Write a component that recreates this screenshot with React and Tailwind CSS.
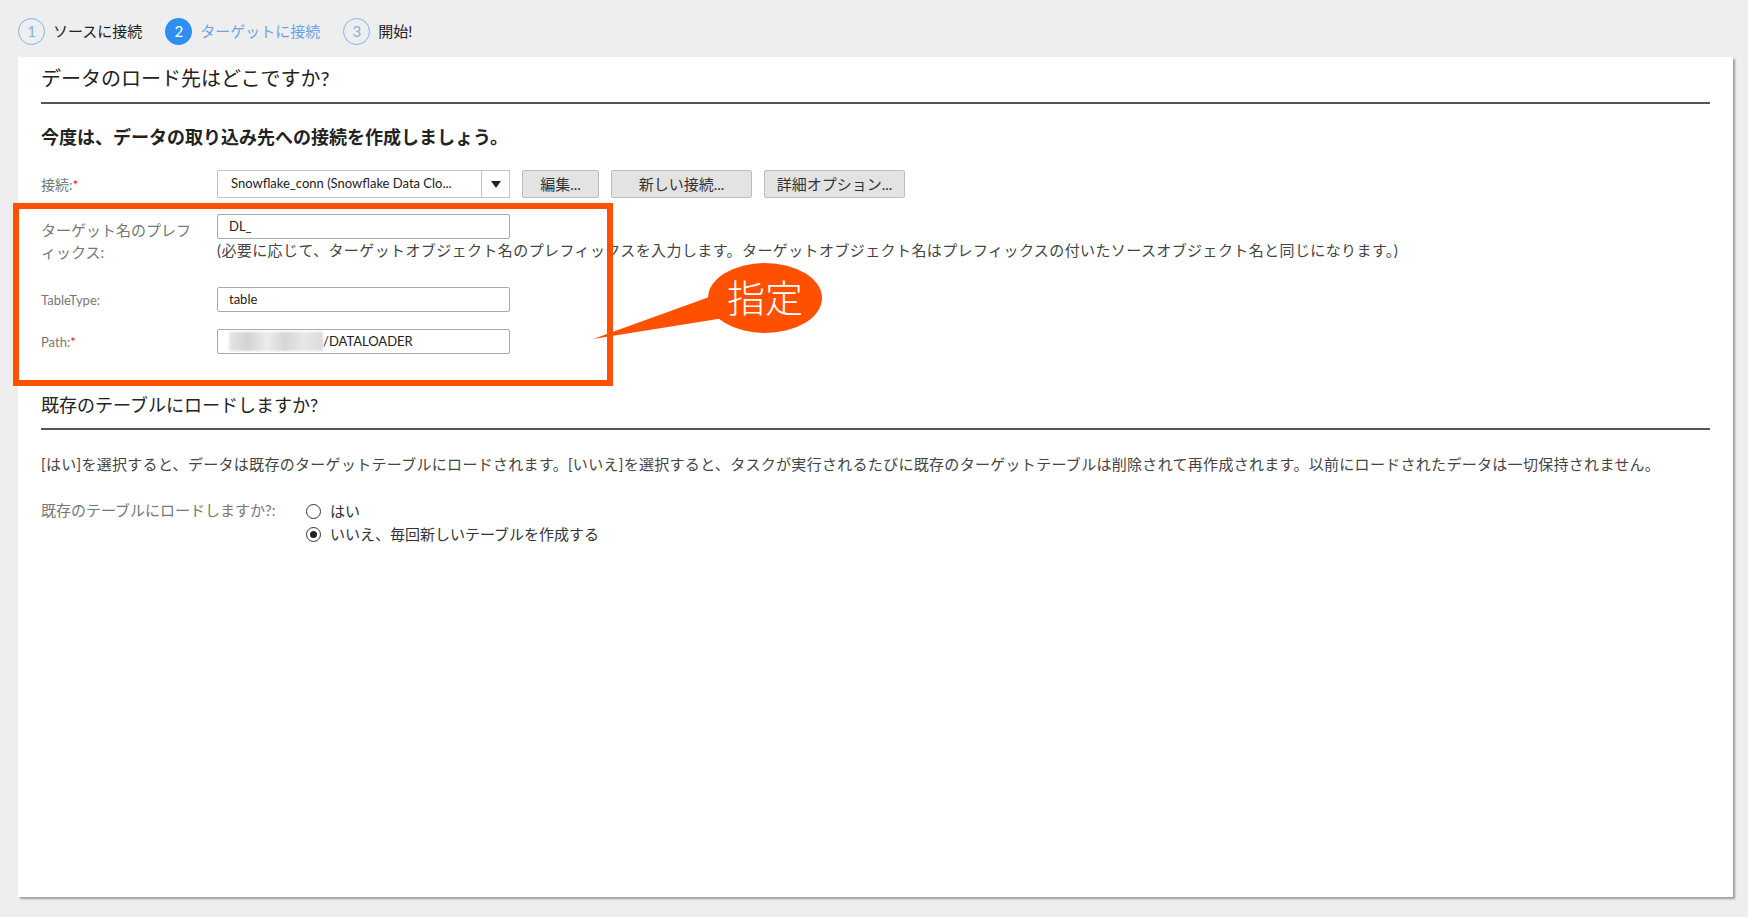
import React from 'react';

const FONT = { fontFamily: 'Lato, "Noto Sans CJK JP", sans-serif' };

function Step({ n, label, active }) {
  return (
    <div className="flex items-center gap-[8px]">
      <div
        className={
          active
            ? 'w-[27px] h-[27px] rounded-full bg-[#2f8ff0] text-white flex items-center justify-center text-[15px]'
            : 'w-[27px] h-[27px] rounded-full border border-[#7ab4f0] text-[#7ab4f0] flex items-center justify-center text-[15px]'
        }
      >
        {n}
      </div>
      <span className={active ? 'text-[15px] text-[#6ca3e6]' : 'text-[15px] text-[#222]'}>{label}</span>
    </div>
  );
}

function Button({ children, w }) {
  return (
    <button className={`${w} h-[28px] bg-[#e3e3e3] border border-[#bdbdbd] rounded-[2px] text-[15px] text-[#333] flex items-center justify-center`}>
      {children}
    </button>
  );
}

function Radio({ checked, children }) {
  return (
    <label className="flex items-center gap-[9px] h-[23px] text-[15px] text-[#333]">
      <span className="w-[15px] h-[15px] rounded-full border-[1.5px] border-[#333] bg-white flex items-center justify-center">
        {checked && <span className="w-[7px] h-[7px] rounded-full bg-[#222]" />}
      </span>
      {children}
    </label>
  );
}

export default function App() {
  return (
    <div className="relative min-h-[917px] bg-[#eeeeee] overflow-hidden" style={FONT}>
      {/* wizard steps */}
      <div className="h-[57px] pt-[6px] pl-[18px] flex items-center gap-[23px]">
        <Step n="1" label="ソースに接続" />
        <Step n="2" label="ターゲットに接続" active />
        <Step n="3" label="開始!" />
      </div>

      {/* main panel */}
      <div className="ml-[18px] w-[1715px] h-[840px] bg-white shadow-[2px_2px_2px_rgba(0,0,0,0.35)] pt-[7px] pl-[23px] pr-[23px]">
        <h1 className="h-[28px] leading-[28px] text-[20px] text-[#222]">データのロード先はどこですか?</h1>
        <div className="mt-[10px] h-[2px] bg-[#555]" />

        <h2 className="mt-[20px] leading-[26px] text-[18px] font-bold text-[#222]">
          今度は、データの取り込み先への接続を作成しましょう。
        </h2>

        {/* connection */}
        <div className="mt-[20px] flex items-center h-[28px]">
          <div className="w-[176px] text-[14px] text-[#777]">
            接続:<span className="text-[#e02020]">*</span>
          </div>
          <div className="w-[293px] h-[28px] border border-[#c4c4c4] bg-white flex">
            <div className="flex-1 flex items-center pl-[13px] text-[13px] text-[#222] truncate">
              Snowflake_conn (Snowflake Data Clo...
            </div>
            <div className="w-[28px] border-l border-[#c4c4c4] flex items-center justify-center">
              <svg width="10" height="7" viewBox="0 0 10 7">
                <path d="M0 0 L10 0 L5 7 Z" fill="#222" />
              </svg>
            </div>
          </div>
          <div className="ml-[12px] flex gap-[12px]">
            <Button w="w-[77px]">編集...</Button>
            <Button w="w-[141px]">新しい接続...</Button>
            <Button w="w-[141px]">詳細オプション...</Button>
          </div>
        </div>

        {/* prefix */}
        <div className="mt-[16px] flex">
          <div className="w-[176px] pt-[5px] text-[15px] leading-[22px] text-[#777]">
            ターゲット名のプレフ
            <br />
            ィックス:
          </div>
          <div>
            <div className="w-[293px] h-[25px] border border-[#aaa] rounded-[2px] flex items-center pl-[11px] text-[13px] text-[#222]">
              DL_
            </div>
            <p className="mt-[2px] leading-[18px] text-[15px] tracking-[0.4px] text-[#444]">
              (必要に応じて、ターゲットオブジェクト名のプレフィックスを入力します。ターゲットオブジェクト名はプレフィックスの付いたソースオブジェクト名と同じになります。)
            </p>
          </div>
        </div>

        {/* table type */}
        <div className="mt-[24px] flex items-center">
          <div className="w-[176px] pt-[2px] text-[13px] text-[#777]">TableType:</div>
          <div className="w-[293px] h-[25px] border border-[#aaa] rounded-[2px] flex items-center pl-[11px] text-[13px] text-[#222]">
            table
          </div>
        </div>

        {/* path */}
        <div className="mt-[17px] flex items-center">
          <div className="w-[176px] pt-[2px] text-[13px] text-[#777]">
            Path:<span className="text-[#e02020]">*</span>
          </div>
          <div className="w-[293px] h-[25px] border border-[#aaa] rounded-[2px] flex items-center pl-[11px] text-[13px] text-[#222]">
            <span className="w-[94px] h-[19px] bg-[linear-gradient(90deg,#e6e6e6,#d2d2d2,#ececec,#d6d6d6,#e8e8e8,#dadada)] blur-[1px]" />
            <span>/DATALOADER</span>
          </div>
        </div>

        {/* second section */}
        <h2 className="mt-[38px] leading-[26px] text-[18px] text-[#222]">既存のテーブルにロードしますか?</h2>
        <div className="mt-[10px] h-[2px] bg-[#555]" />
        <p className="mt-[23px] leading-[22px] text-[15px] tracking-[0.3px] text-[#444]">
          [はい]を選択すると、データは既存のターゲットテーブルにロードされます。[いいえ]を選択すると、タスクが実行されるたびに既存のターゲットテーブルは削除されて再作成されます。以前にロードされたデータは一切保持されません。
        </p>
        <div className="mt-[25px] flex">
          <div className="w-[265px] leading-[20px] text-[15px] text-[#777]">既存のテーブルにロードしますか?:</div>
          <div className="flex flex-col">
            <Radio>はい</Radio>
            <Radio checked>いいえ、毎回新しいテーブルを作成する</Radio>
          </div>
        </div>
      </div>

      {/* annotation overlay */}
      <div className="absolute left-[13px] top-[203px] w-[600px] h-[183px] border-[6px] border-[#ff5000] pointer-events-none" />
      <svg className="absolute left-0 top-0 pointer-events-none" width="1748" height="917">
        <polygon points="712,296 724,318 593,339" fill="#ff5000" />
        <ellipse cx="765" cy="298" rx="57" ry="35" fill="#ff5000" />
      </svg>
      <div className="absolute left-[708px] top-[274px] w-[114px] text-center text-[38px] leading-[46px] text-white font-light">
        指定
      </div>
    </div>
  );
}
